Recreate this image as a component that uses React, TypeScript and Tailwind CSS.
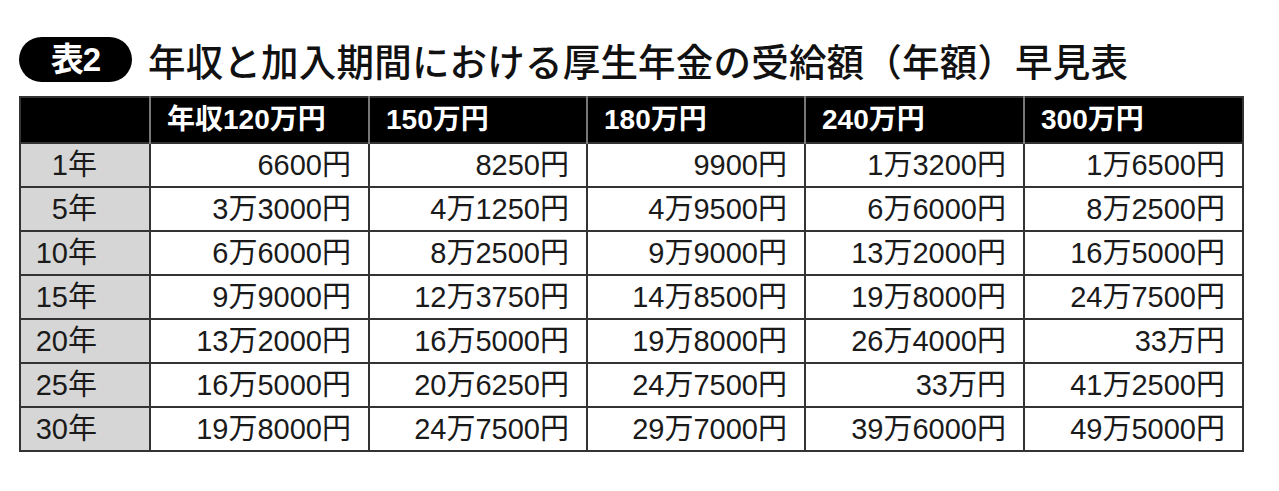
import React from 'react';

const heads = ['年収120万円', '150万円', '180万円', '240万円', '300万円'];

const rows: [string, string[]][] = [
  ['1年', ['6600円', '8250円', '9900円', '1万3200円', '1万6500円']],
  ['5年', ['3万3000円', '4万1250円', '4万9500円', '6万6000円', '8万2500円']],
  ['10年', ['6万6000円', '8万2500円', '9万9000円', '13万2000円', '16万5000円']],
  ['15年', ['9万9000円', '12万3750円', '14万8500円', '19万8000円', '24万7500円']],
  ['20年', ['13万2000円', '16万5000円', '19万8000円', '26万4000円', '33万円']],
  ['25年', ['16万5000円', '20万6250円', '24万7500円', '33万円', '41万2500円']],
  ['30年', ['19万8000円', '24万7500円', '29万7000円', '39万6000円', '49万5000円']],
];

const font = "font-['Liberation_Sans','Noto_Sans_CJK_JP',sans-serif]";

const App = () => {
  return (
    <div className={`min-h-[491px] w-[1279px] bg-white pl-[19px] pt-[37px] text-[#1a1a1a] ${font}`}>
      <div className="flex items-center h-[45px]">
        <span className="flex h-[45px] w-[113px] items-center justify-center rounded-full bg-black text-[33px] font-bold leading-none tracking-[-1px] text-white">
          表2
        </span>
        <h1 className="ml-[16px] font-['Noto_Sans_CJK_JP',sans-serif] text-[37.5px] font-medium leading-none tracking-[0.2px] text-[#111]">
          年収と加入期間における厚生年金の受給額（年額）早見表
        </h1>
      </div>
      <table className="mt-[14px] border-collapse table-fixed w-[1223px] border-2 border-[#333]">
        <colgroup>
          <col className="w-[130px]" />
          <col className="w-[219px]" />
          <col className="w-[218px]" />
          <col className="w-[218px]" />
          <col className="w-[219px]" />
          <col className="w-[219px]" />
        </colgroup>
        <thead>
          <tr className="h-[46px] bg-black">
            <th className="border-r-2 border-[#777]" />
            {heads.map((h, i) => (
              <th
                key={h}
                className={`pl-[16px] text-left text-[28px] font-bold leading-none text-white ${i < 4 ? 'border-r-2 border-[#777]' : ''}`}>
                {h}
              </th>
            ))}
          </tr>
        </thead>
        <tbody>
          {rows.map(([label, vals]) => (
            <tr key={label} className="h-[44px] border-t-2 border-[#333]">
              <td className="bg-[#d6d6d6] pr-[52px] text-right text-[29px] leading-none border-r-2 border-[#333]">
                {label}
              </td>
              {vals.map((v, i) => (
                <td
                  key={i}
                  className="border-r-2 border-[#333] pr-[17px] text-right text-[29px] leading-none">
                  {v}
                </td>
              ))}
            </tr>
          ))}
        </tbody>
      </table>
    </div>
  );
};

export default App;
